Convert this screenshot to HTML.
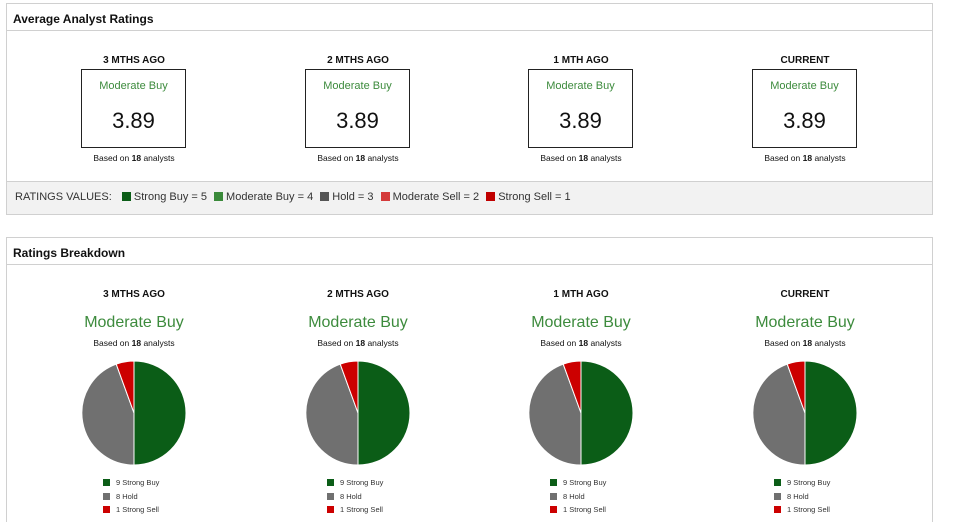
<!DOCTYPE html>
<html><head><meta charset="utf-8"><style>
*{margin:0;padding:0;box-sizing:border-box}
html{width:956px;height:522px;overflow:hidden}
body{width:956px;height:522px;background:#fff;font-family:"Liberation Sans",sans-serif;color:#111;position:relative;overflow:hidden}
.panel{position:absolute;left:6px;width:927px;border:1px solid #d0d0d0;background:#fff}
.hd{height:27px;border-bottom:1px solid #d0d0d0;font-weight:bold;font-size:12px;padding:8px 0 0 6px}
.a{position:absolute;text-align:center;width:180px}
.t{font-weight:bold;font-size:10px}
.box{position:absolute;width:105px;height:79px;border:1px solid #222}
.box .g{color:#3d8b3d;font-size:11px;text-align:center;margin-top:10px}
.box .n{font-size:22px;text-align:center;margin-top:16px}
.b{font-size:8.5px}
.foot{position:absolute;left:0;top:177px;width:925px;height:33px;background:#f2f2f2;border-top:1px solid #d0d0d0;font-size:11px;color:#333;padding:9px 0 0 8px;white-space:nowrap}
.sq{display:inline-block;width:9px;height:9px;vertical-align:-1px;margin:0 3px 0 4px}
.mg{color:#3d8b3d;font-size:16px}
.lg{position:absolute;font-size:7.5px;color:#333;line-height:13.5px}
.lg i{display:inline-block;width:7px;height:7px;margin-right:6px;vertical-align:-1px}
</style></head><body>
<div class="panel" style="top:3px;height:212px">
<div class="hd">Average Analyst Ratings</div>
<div class="foot">RATINGS VALUES: &nbsp;<span class="sq" style="background:#0b5d17"></span>Strong Buy = 5 <span class="sq" style="background:#3a8a3a"></span>Moderate Buy = 4 <span class="sq" style="background:#555"></span>Hold = 3 <span class="sq" style="background:#d43a3a"></span>Moderate Sell = 2 <span class="sq" style="background:#c00000"></span>Strong Sell = 1</div>
</div>
<div class="a t" style="left:44px;top:55px">3 MTHS AGO</div>
<div class="a t" style="left:268px;top:55px">2 MTHS AGO</div>
<div class="a t" style="left:491px;top:55px">1 MTH AGO</div>
<div class="a t" style="left:715px;top:55px">CURRENT</div>
<div class="box" style="left:81px;top:69px"><div class="g">Moderate Buy</div><div class="n">3.89</div></div>
<div class="box" style="left:305px;top:69px"><div class="g">Moderate Buy</div><div class="n">3.89</div></div>
<div class="box" style="left:528px;top:69px"><div class="g">Moderate Buy</div><div class="n">3.89</div></div>
<div class="box" style="left:752px;top:69px"><div class="g">Moderate Buy</div><div class="n">3.89</div></div>
<div class="a b" style="left:44px;top:153px">Based on <b>18</b> analysts</div>
<div class="a b" style="left:268px;top:153px">Based on <b>18</b> analysts</div>
<div class="a b" style="left:491px;top:153px">Based on <b>18</b> analysts</div>
<div class="a b" style="left:715px;top:153px">Based on <b>18</b> analysts</div>

<div class="panel" style="top:237px;height:300px">
<div class="hd">Ratings Breakdown</div>
</div>
<div class="a t" style="left:44px;top:289px">3 MTHS AGO</div>
<div class="a t" style="left:268px;top:289px">2 MTHS AGO</div>
<div class="a t" style="left:491px;top:289px">1 MTH AGO</div>
<div class="a t" style="left:715px;top:289px">CURRENT</div>
<div class="a mg" style="left:44px;top:314px">Moderate Buy</div>
<div class="a mg" style="left:268px;top:314px">Moderate Buy</div>
<div class="a mg" style="left:491px;top:314px">Moderate Buy</div>
<div class="a mg" style="left:715px;top:314px">Moderate Buy</div>
<div class="a b" style="left:44px;top:338px">Based on <b>18</b> analysts</div>
<div class="a b" style="left:268px;top:338px">Based on <b>18</b> analysts</div>
<div class="a b" style="left:491px;top:338px">Based on <b>18</b> analysts</div>
<div class="a b" style="left:715px;top:338px">Based on <b>18</b> analysts</div>

<svg style="position:absolute;left:0;top:0" width="956" height="522">
<defs><g id="pie">
<path d="M0 0 L0 -52 A52 52 0 0 1 0 52 Z" fill="#0b5d17" stroke="#fff" stroke-width="1"/>
<path d="M0 0 L0 52 A52 52 0 0 1 -17.8 -48.9 Z" fill="#707070" stroke="#fff" stroke-width="1"/>
<path d="M0 0 L-17.8 -48.9 A52 52 0 0 1 0 -52 Z" fill="#cc0000" stroke="#fff" stroke-width="1"/>
</g></defs>
<use href="#pie" x="134" y="413"/>
<use href="#pie" x="358" y="413"/>
<use href="#pie" x="581" y="413"/>
<use href="#pie" x="805" y="413"/>
</svg>

<div class="lg" style="left:103px;top:476px"><i style="background:#0b5d17"></i>9 Strong Buy<br><i style="background:#707070"></i>8 Hold<br><i style="background:#cc0000"></i>1 Strong Sell</div>
<div class="lg" style="left:327px;top:476px"><i style="background:#0b5d17"></i>9 Strong Buy<br><i style="background:#707070"></i>8 Hold<br><i style="background:#cc0000"></i>1 Strong Sell</div>
<div class="lg" style="left:550px;top:476px"><i style="background:#0b5d17"></i>9 Strong Buy<br><i style="background:#707070"></i>8 Hold<br><i style="background:#cc0000"></i>1 Strong Sell</div>
<div class="lg" style="left:774px;top:476px"><i style="background:#0b5d17"></i>9 Strong Buy<br><i style="background:#707070"></i>8 Hold<br><i style="background:#cc0000"></i>1 Strong Sell</div>
</body></html>
